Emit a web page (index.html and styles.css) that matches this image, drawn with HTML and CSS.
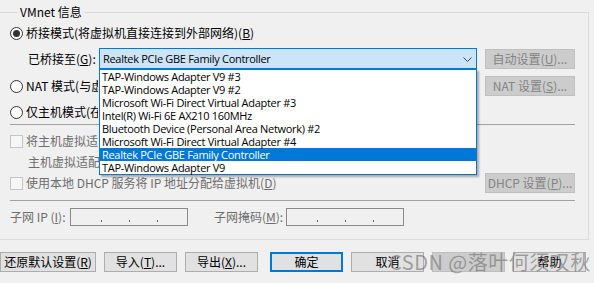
FILE: index.html
```html
<!DOCTYPE html>
<html>
<head>
  <title>虚拟网络编辑器</title>
  <link rel="stylesheet" href="styles.css">
</head>
<body>
  <div class="dialog">
    <fieldset class="group">
      <legend>VMnet 信息</legend>

      <div class="row r-bridge">
        <span class="radio checked"></span>
        <span class="opt">桥接模式(将虚拟机直接连接到外部网络)(<u>B</u>)</span>
      </div>

      <div class="row r-combo">
        <span class="combo-label">已桥接至(<u>G</u>):</span>
        <div class="combo">
          <span class="combo-value latin">Realtek PCIe GBE Family Controller</span>
          <svg class="chevron" width="9" height="5" viewBox="0 0 9 5"><polyline points="0.5,0.5 4.5,4.5 8.5,0.5" fill="none" stroke="#444" stroke-width="1"/></svg>
          <ul class="dropdown latin">
            <li>TAP-Windows Adapter V9 #3</li>
            <li>TAP-Windows Adapter V9 #2</li>
            <li>Microsoft Wi-Fi Direct Virtual Adapter #3</li>
            <li>Intel(R) Wi-Fi 6E AX210 160MHz</li>
            <li>Bluetooth Device (Personal Area Network) #2</li>
            <li>Microsoft Wi-Fi Direct Virtual Adapter #4</li>
            <li class="selected">Realtek PCIe GBE Family Controller</li>
            <li>TAP-Windows Adapter V9</li>
          </ul>
        </div>
        <button class="btn side disabled">自动设置(<u>U</u>)...</button>
      </div>

      <div class="row r-nat">
        <span class="radio"></span>
        <span class="opt cut">NAT 模式(与虚拟机共享主机的 IP 地址)(<u>N</u>)</span>
        <button class="btn side disabled">NAT 设置(<u>S</u>)...</button>
      </div>

      <div class="row r-host">
        <span class="radio"></span>
        <span class="opt cut">仅主机模式(在专用网络内连接虚拟机)(<u>H</u>)</span>
      </div>

      <div class="sep sep-1"></div>

      <div class="row r-check1 off">
        <span class="check"></span>
        <span class="opt cut">将主机虚拟适配器连接到此网络(<u>V</u>)</span>
      </div>

      <div class="row r-adapter off">
        <span class="cut">主机虚拟适配器名称: VMware 网络适配器 VMnet0</span>
      </div>

      <div class="row r-dhcp off">
        <span class="check"></span>
        <span class="opt">使用本地 DHCP 服务将 IP 地址分配给虚拟机(<u>D</u>)</span>
        <button class="btn side disabled">DHCP 设置(<u>P</u>)...</button>
      </div>

      <div class="sep sep-2"></div>

      <div class="row r-subnet off">
        <span class="ip-label">子网 IP (<u>I</u>):</span>
        <span class="ip"><i></i><i></i><i></i></span>
        <span class="ip-label mask-label">子网掩码(<u>M</u>):</span>
        <span class="ip"><i></i><i></i><i></i></span>
      </div>
    </fieldset>

    <div class="actions">
      <button class="btn wide">还原默认设置(<u>R</u>)</button>
      <button class="btn">导入(<u>T</u>)...</button>
      <button class="btn">导出(<u>X</u>)...</button>
      <button class="btn primary">确定</button>
      <button class="btn">取消</button>
      <button class="btn disabled"></button>
      <button class="btn">帮助</button>
    </div>
  </div>

  <div class="watermark">CSDN @落叶何须叹秋</div>
</body>
</html>
```

FILE: styles.css
```css
body {
  margin: 0;
  background: #f0f0f0;
  font-family: "Noto Sans CJK SC", sans-serif;
  font-size: 12px;
  color: #000;
  overflow: hidden;
  height: 283px;
  position: relative;
}

u {
  text-decoration: underline;
  text-underline-offset: 1px;
}

.latin {
  font-family: "Open Sans", sans-serif;
  font-size: 11px;
  letter-spacing: -0.3px;
}

.dialog {
  width: 594px;
  margin-left: -3px;
  height: 280px;
  border-bottom: 2px solid #4a4a4a;
}

.group {
  margin: 4px 0 0 0;
  padding: 5px 13px 13px 12px;
  width: 565px;
  border: 1px solid #dcdcdc;
}

.group legend {
  margin-left: 8px;
  padding: 0 2px;
  line-height: 16px;
}

.row {
  display: flex;
  align-items: center;
  white-space: nowrap;
  line-height: 16px;
}

.r-bridge { height: 16px; }
.r-combo { margin-top: 7px; height: 21px; }
.r-nat { margin-top: 7px; height: 20px; }
.r-host { margin-top: 8px; height: 16px; }
.r-check1 { margin-top: 8px; height: 16px; }
.r-adapter { margin-top: 5px; height: 16px; padding-left: 18px; }
.r-dhcp { margin-top: 3px; height: 20px; }
.r-subnet { margin-top: 7px; height: 18px; }

.off { color: #6d6d6d; }

/* text running under the open list is hidden by it */
.cut {
  overflow: hidden;
  max-width: 72px;
}
.r-adapter .cut { max-width: 71px; }

.sep {
  height: 1px;
  background: #a0a0a0;
}
.sep-1 { margin-top: 4px; }
.sep-2 { margin-top: 7px; }

.radio {
  width: 11px;
  height: 11px;
  border: 1px solid #333;
  border-radius: 50%;
  background: #fff;
  flex: none;
  position: relative;
}

.radio.checked::after {
  content: "";
  position: absolute;
  left: 2px;
  top: 2px;
  width: 7px;
  height: 7px;
  border-radius: 50%;
  background: #333;
}

.check {
  width: 11px;
  height: 11px;
  border: 1px solid #c5c5c5;
  background: #f6f6f6;
  flex: none;
}

.opt { margin-left: 3px; }

.combo-label {
  margin-left: 18px;
  width: 71px;
}

.combo {
  position: relative;
  width: 376px;
  height: 19px;
  border: 1px solid #0078d7;
  background: #cce4f7;
  display: flex;
  align-items: center;
}

.combo-value {
  margin-left: 3px;
  flex: 1;
}

.chevron {
  margin-right: 4px;
  margin-top: 1px;
}

.dropdown {
  position: absolute;
  top: 20px;
  left: -1px;
  width: 376px;
  margin: 0;
  padding: 0;
  list-style: none;
  background: #fff;
  border: 1px solid #0078d7;
  box-shadow: 2px 2px 2px rgba(0, 0, 0, 0.3);
  z-index: 5;
}

.dropdown li {
  height: 13px;
  line-height: 13px;
  padding-left: 2px;
}

.dropdown li.selected {
  background: #0078d7;
  color: #fff;
}

.btn {
  font-family: inherit;
  font-size: 12px;
  height: 20px;
  padding: 0;
  line-height: 16px;
  background: #e1e1e1;
  border: 1px solid #adadad;
  color: #000;
  width: 73px;
  white-space: nowrap;
}

.btn.side {
  margin-left: auto;
  width: 90px;
}

.btn.disabled {
  background: #cccccc;
  border-color: #bfbfbf;
  color: #838383;
}

.btn.primary {
  border: 2px solid #0078d7;
}

.ip-label { width: 60px; }

.mask-label {
  margin-left: 26px;
  width: 72px;
}

.ip {
  box-sizing: border-box;
  width: 118px;
  height: 18px;
  border: 1px solid #8a8a8a;
  display: flex;
  align-items: flex-end;
  gap: 27px;
  padding: 0 0 3px 30px;
}

.ip i {
  width: 1px;
  height: 2px;
  background: #666;
}

.actions {
  display: flex;
  margin-top: 12px;
  padding-left: 3px;
  gap: 8px;
}

.actions .btn.wide { width: 96px; }
.actions .btn.primary { margin-left: 4px; }

.watermark {
  position: absolute;
  left: 389px;
  top: 249px;
  font-size: 20px;
  line-height: 26px;
  color: rgba(110, 110, 110, 0.6);
  white-space: nowrap;
  letter-spacing: 0.5px;
}
```
